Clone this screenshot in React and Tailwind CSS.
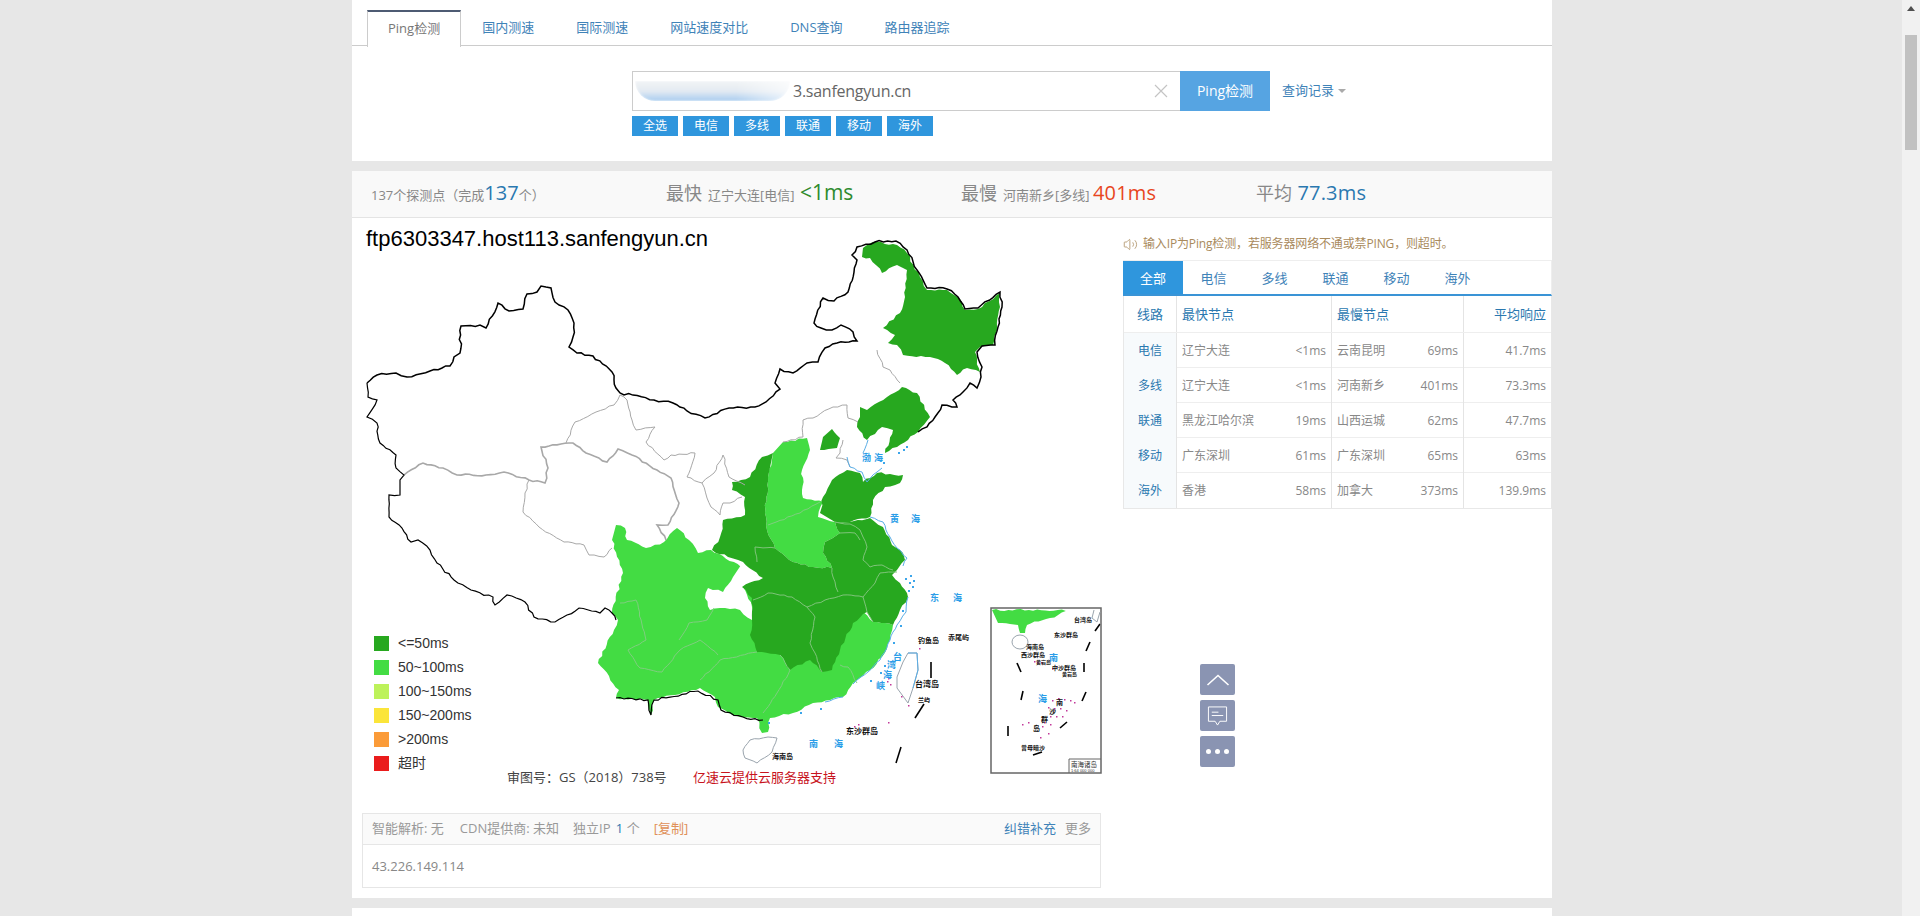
import React from 'react';
import { Volume2 } from 'lucide-react';

const tabs = ['国内测速', '国际测速', '网站速度对比', 'DNS查询', '路由器追踪'];
const filters = ['全选', '电信', '多线', '联通', '移动', '海外'];
const panelTabs = ['电信', '多线', '联通', '移动', '海外'];

const rows = [
  ['电信', '辽宁大连', '<1ms', '云南昆明', '69ms', '41.7ms'],
  ['多线', '辽宁大连', '<1ms', '河南新乡', '401ms', '73.3ms'],
  ['联通', '黑龙江哈尔滨', '19ms', '山西运城', '62ms', '47.7ms'],
  ['移动', '广东深圳', '61ms', '广东深圳', '65ms', '63ms'],
  ['海外', '香港', '58ms', '加拿大', '373ms', '139.9ms'],
];

const legend = [
  ['<=50ms', 'bg-[#27a81f]'],
  ['50~100ms', 'bg-[#43dc43]'],
  ['100~150ms', 'bg-[#bdf25a]'],
  ['150~200ms', 'bg-[#fbe53a]'],
  ['>200ms', 'bg-[#fb9b38]'],
  ['超时', 'bg-[#ea1c1c]'],
];

// map shapes, in page coordinates
const border1 = '367,383 377,375 396,373 407,377 430,371 450,366 454,357 460,353 461,326 480,325 486,328 498,303 509,311 523,309 527,294 537,292 541,286 551,288 555,302 568,310 574,323 573,337 569,347 577,353 593,356 612,372 616,388 620,393 654,400 673,403 687,411 705,418 729,408 755,407 766,402 780,389 775,383 780,369 793,373 807,363 818,362 825,348 837,343 857,341 853,332 841,325 832,330 821,328 814,323 823,298 834,301 848,292 857,260 852,255 857,247 875,242 896,241 907,250 917,270 927,288 947,289 958,297 965,309 978,308 1000,292 1002,307 998,327 995,345 982,346 977,352 982,367 981,377 977,388 970,383 963,392 953,400 957,407 942,405 935,417 927,427 918,432';
const border2 = '367,383 368,397 377,400 367,417 377,423 380,443 396,455 396,468 404,475 400,480 400,495 389,495 389,517 402,528 411,542 418,540 430,550 437,563 454,580 471,590 493,597 495,605 507,595 525,602 534,617 555,622 579,608 600,613 605,608 612,613 616,620';
const border3 = '616,698 648,700 651,715 654,700 698,691 718,700 721,710 743,717 763,720';
const heilongjiang = '863,248 873,242 897,245 907,253 920,277 927,290 947,290 959,298 965,310 978,309 1000,293 1000,307 997,327 993,345 980,347 975,352 980,372 967,368 957,375 945,363 930,357 903,355 897,345 888,343 895,335 883,328 900,313 905,297 907,270 897,265 882,273 870,258 862,257';
const liaoning = '860,407 867,410 887,397 902,387 917,393 930,417 918,432 897,447 885,453 893,430 882,427 867,440 857,427 860,417';
const beijing = '832,429 840,438 837,448 820,450 823,437';
const shandong = '820,513 823,497 832,480 847,470 860,473 863,482 877,473 903,475 900,483 885,487 873,500 870,517 850,522 835,522';
const henan = '783,442 807,438 810,450 802,470 803,498 823,502 818,517 835,522 840,533 825,542 823,553 832,568 813,567 793,562 775,548 767,530 765,513 768,477 773,453';
const southwest = '616,525 625,528 627,540 646,548 664,542 677,528 689,540 698,553 711,550 741,567 780,600 860,610 873,622 893,625 890,640 882,657 870,670 853,683 843,697 813,703 793,713 770,718 768,732 762,733 757,718 733,715 718,707 715,697 700,688 654,700 651,715 648,700 616,698 619,690 598,663 614,630 618,620 612,613 623,573 612,540';
const chongqing = '743,562 763,577 757,585 743,587 752,607 752,620 740,610 725,608 710,610 705,598 708,588 723,592 733,577';
const central = '773,453 762,457 750,477 732,482 732,490 745,497 745,515 723,520 720,537 712,550 728,557 743,562 763,578 742,587 752,598 752,620 750,635 757,652 780,655 790,670 810,660 822,672 832,670 840,650 853,623 867,612 873,622 893,625 900,610 908,597 900,583 892,575 897,570 905,560 903,553 892,545 883,527 870,518 850,522 835,522 840,533 825,542 823,553 832,568 813,567 793,562 775,548 767,530 765,513 768,477';

const grayLines = [
  '404,475 423,463 443,468 457,475 486,475 504,472 529,480 545,483 548,468 541,447 573,443 586,453 607,462 618,449 632,455 657,470 671,478 679,503 668,525 657,525 666,540',
  '620,395 614,405 596,412 575,422 566,443',
  '620,395 627,400 632,420 636,430 655,427 646,442 664,460 671,455 695,453 687,477 702,483 707,498 711,507 720,515 723,503 730,503 742,497',
  '702,483 714,473 723,455 729,477 745,485',
  '529,480 525,493 523,512 539,527 564,542 584,545 589,555 604,557 612,548',
  '877,350 883,367 890,370 900,383',
  '783,442 803,437 803,420 813,418 833,407 847,405 848,418 858,422',
  '843,440 840,453 836,458 847,460 850,467',
];
const darkLines = [
  '753,600 768,593 792,597 807,607 825,600 843,595 863,597 875,583 880,573 897,572',
  '807,607 815,617 810,643 815,653 822,672',
  '832,568 833,577 838,592',
  '835,522 850,524 860,530 863,537 867,547 863,560 870,567 882,565 893,570',
  '840,533 855,533 860,540',
  '775,548 755,547 757,562',
  '863,597 867,612 873,622',
];
const lightLines = [
  '620,603 636,600 646,640 628,650 640,668 662,672 680,650 700,640 718,655',
  '679,640 689,623 707,620 714,608',
  '700,680 720,660 757,652',
  '780,655 790,670 777,693 763,713',
  '840,665 848,667 857,683',
  '768,525 800,513 820,502',
];
const coast = [
  '847,457 850,467 862,472 867,482 877,472 882,468',
  '863,453 868,440',
  '870,517 883,522 890,537 897,548 907,558 903,566',
  '908,597 906,612 897,625 890,640 880,660 868,672 853,684',
  '843,697 825,702',
];
const dashes = [
  '931,662 931,678', '924,704 915,718', '901,747 896,763',
  '1017,663 1021,672', '1084,663 1084,672', '1090,642 1086,651', '1100,624 1095,631',
  '1023,691 1021,700', '1086,692 1082,701', '1067,722 1060,728', '1008,726 1008,736', '1042,752 1033,755',
];
const pinkDots = [
  [919,648],[888,722],[854,726],[858,724],[890,684],[888,678],[887,681],[901,696],[908,705],
  [1034,661],[1037,662],[1041,662],[1052,668],[1056,666],[1052,700],[1058,698],[1064,699],
  [1070,700],[1074,702],[1048,707],[1054,708],[1060,708],[1066,710],[1050,716],[1056,716],
  [1062,716],[1044,722],[1050,724],[1028,722],[1022,724],[1040,737],[1042,726],[1048,733],
];
const blueDots = [
  [905,578],[909,582],[912,586],[908,590],[913,580],[910,575],[884,665],[880,672],
  [870,680],[820,708],[800,712],[768,722],[903,449],[906,446],[898,452],[883,462],[902,610],[900,625],[893,642],
];
const sea = [
  ['渤', 862, 461], ['海', 874, 461], ['黄', 890, 522], ['海', 911, 522], ['东', 930, 601], ['海', 953, 601],
  ['南', 809, 747], ['海', 834, 747],
  ['台', 893, 660], ['湾', 887, 668], ['海', 883, 678], ['峡', 876, 689],
  ['南', 1049, 661], ['海', 1038, 702],
];
const islands = [
  ['钓鱼岛', 918, 643, 7], ['赤尾屿', 948, 640, 7], ['台湾岛', 915, 687, 8], ['兰屿', 918, 702, 6],
  ['东沙群岛', 846, 734, 8], ['海南岛', 772, 759, 7],
  ['台湾岛', 1074, 622, 6], ['东沙群岛', 1054, 637, 6], ['海南岛', 1026, 649, 6], ['西沙群岛', 1021, 657, 6],
  ['黄岩岛', 1036, 664, 5], ['中沙群岛', 1052, 670, 6], ['黄岩岛', 1062, 676, 5],
  ['沙', 1049, 714, 7], ['群', 1041, 722, 7], ['岛', 1033, 731, 7], ['南', 1056, 705, 7], ['曾母暗沙', 1021, 750, 6],
];

// roughen a straight-segment outline so it reads like a coast or a border
function jag(points, amp = 1.2) {
  const pts = points.split(' ').map((p) => p.split(',').map(Number));
  const out = [];
  pts.forEach(([x, y], i) => {
    out.push(`${x},${y}`);
    const next = pts[i + 1];
    if (!next) return;
    const dx = next[0] - x;
    const dy = next[1] - y;
    const len = Math.hypot(dx, dy);
    const n = Math.floor(len / 4);
    for (let k = 1; k < n; k++) {
      const t = k / n;
      const r = Math.sin((x + k) * 12.9898 + (y - k) * 78.233) * 43758.5453;
      const off = (r - Math.floor(r) - 0.5) * 2 * amp;
      out.push(`${(x + dx * t - (dy / len) * off).toFixed(1)},${(y + dy * t + (dx / len) * off).toFixed(1)}`);
    }
  });
  return out.join(' ');
}

function ChinaMap() {
  return (
    <svg viewBox="352 218 771 595" className="absolute left-0 top-0 w-[771px] h-[595px]">
      <polygon points={jag(southwest)} fill="#43dc43" />
      <polygon points={jag(henan)} fill="#43dc43" />
      <polygon points={jag(chongqing)} fill="#fff" />
      <polygon points={jag(central)} fill="#27a81f" />
      <polygon points={jag(shandong)} fill="#27a81f" />
      <polygon points={jag(heilongjiang)} fill="#27a81f" />
      <polygon points={jag(liaoning)} fill="#27a81f" />
      <polygon points={jag(beijing, 0.5)} fill="#27a81f" />
      {lightLines.map((p, i) => <polyline key={i} points={jag(p, 0.8)} fill="none" stroke="#7fce7f" strokeWidth="1" />)}
      {darkLines.map((p, i) => <polyline key={i} points={jag(p, 0.8)} fill="none" stroke="#7fc47a" strokeWidth="1" />)}
      {grayLines.map((p, i) => <polyline key={i} points={jag(p, 0.9)} fill="none" stroke="#a8a8a8" strokeWidth={i === 0 ? 1.6 : 1} />)}
      {coast.map((p, i) => <polyline key={i} points={jag(p, 0.8)} fill="none" stroke="#5aaee6" strokeWidth="1" />)}
      <polyline points={jag(border1)} fill="none" stroke="#000" strokeWidth="1.5" />
      <polyline points={jag(border2)} fill="none" stroke="#000" strokeWidth="1.2" />
      <polyline points={jag(border3)} fill="none" stroke="#000" strokeWidth="1.2" />
      {/* taiwan, hainan */}
      <polygon points="908,653 917,653 918,670 913,688 908,703 897,688 897,677 903,662" fill="#fff" stroke="#9aa4ad" strokeWidth="1" />
      <polyline points="908,653 917,653 918,670 913,688" fill="none" stroke="#5aaee6" strokeWidth="1" />
      <polygon points={jag('743,750 750,740 768,737 777,738 772,752 757,763 745,758 743,750', 0.6)} fill="#fff" stroke="#9aa4ad" strokeWidth="1" />
      {dashes.map((p, i) => <polyline key={i} points={p} fill="none" stroke="#000" strokeWidth="1.6" />)}
      {/* south sea inset */}
      <rect x="991" y="608" width="110" height="165" fill="none" stroke="#666" strokeWidth="1.5" />
      <polygon points={jag('992,610 1070,610 1050,618 1027,625 1025,633 1020,633 1018,625 998,623')} fill="#43dc43" />
      <ellipse cx="1020" cy="642" rx="8" ry="7" fill="#fff" stroke="#9aa4ad" strokeWidth="1" />
      <polyline points="1094,610 1092,618 1097,622 1100,612" fill="none" stroke="#9aa4ad" strokeWidth="1" />
      <polyline points="1069,773 1069,759 1101,759" fill="none" stroke="#666" strokeWidth="1" />
      {pinkDots.map(([x, y], i) => <rect key={i} x={x} y={y} width="1.5" height="1.5" fill="#c2389a" />)}
      {blueDots.map(([x, y], i) => <rect key={i} x={x} y={y} width="2" height="2" fill="#3ba5ea" />)}
      {sea.map(([t, x, y], i) => (
        <text key={i} x={x} y={y} fontSize="9" fill="#2a9de8" fontFamily="Noto Sans CJK SC" fontWeight="700">{t}</text>
      ))}
      {islands.map(([t, x, y, s], i) => (
        <text key={i} x={x} y={y} fontSize={s} fill="#111" fontFamily="Noto Sans CJK SC" fontWeight="700">{t}</text>
      ))}
      <text x="1071" y="767" fontSize="6.5" fill="#333" fontFamily="Noto Sans CJK SC">南海诸岛</text>
      <text x="1071" y="772" fontSize="4" fill="#333" fontFamily="Liberation Sans">1:64 000 000</text>
    </svg>
  );
}

export default function App() {
  return (
    <div className="flex h-[916px] overflow-hidden bg-[#e7e7e7] [font-family:'Open_Sans','Noto_Sans_CJK_SC',sans-serif] text-[13px]">
      <div className="flex-1 min-w-0">
        <div className="w-[1200px] ml-[352px]">
          {/* Search card */}
          <div className="bg-white h-[161px] pt-[10px]">
            <div className="flex h-[35px] pl-[15px] border-b border-[#ccc] box-content">
              <div className="h-[35px] px-[20px] border border-b-0 border-[#ccc] border-t-2 border-t-[#4d5b73] bg-white text-[#777] leading-[32px] -mb-px box-content">
                Ping检测
              </div>
              {tabs.map((t) => (
                <div key={t} className="px-[21px] leading-[34px] text-[#3f83b8]">{t}</div>
              ))}
            </div>
            <div className="flex items-start mt-[25px] pl-[280px]">
              <div className="w-[548px] h-[40px] border border-[#ccc] border-r-0 flex items-center pr-[12px]">
                <div className="w-[155px] h-[20px] ml-[2px] bg-gradient-to-b from-[#f2f4f6] via-[#e4ebf2] to-[#a9cdf0] rounded-b-full blur-[1px] [mask-image:linear-gradient(to_right,#000_65%,rgba(0,0,0,0.3))]" />
                <span className="flex-1 ml-[3px] text-[16px] tracking-[-0.25px] text-[#666]">3.sanfengyun.cn</span>
                <svg viewBox="0 0 14 14" className="w-[14px] h-[14px]">
                  <path d="M1 1 13 13M13 1 1 13" stroke="#c4c4c4" strokeWidth="1.2" fill="none" />
                </svg>
              </div>
              <div className="w-[90px] h-[40px] bg-[#56a4e2] text-white text-[14px] text-center leading-[40px]">Ping检测</div>
              <div className="ml-[12px] h-[40px] flex items-center gap-[4px] text-[#3f83b8]">
                查询记录
                <span className="w-0 h-0 border-x-[4px] border-x-transparent border-t-[4px] border-t-[#aaa]" />
              </div>
            </div>
            <div className="flex gap-[5px] pl-[280px] mt-[5px]">
              {filters.map((f) => (
                <div key={f} className="w-[46px] h-[20px] bg-[#2f96dd] text-white text-[12px] text-center leading-[20px]">{f}</div>
              ))}
            </div>
          </div>

          {/* Result card */}
          <div className="bg-white mt-[10px] h-[727px]">
            <div className="h-[47px] pb-[2px] bg-[#f9f9f9] border-b border-[#e4e4e4] pl-[19px] grid grid-cols-[295px_295px_295px_295px] items-center text-[#888]">
              <div>137个探测点（完成<span className="text-[20px] text-[#2a78b0]">137</span>个）</div>
              <div><span className="text-[18px]">最快</span><span className="ml-[6px]">辽宁大连[电信]</span> <span className="ml-[2px] text-[21px] text-[#2e8b2e]">&lt;1ms</span></div>
              <div><span className="text-[18px]">最慢</span><span className="ml-[6px]">河南新乡[多线]</span> <span className="text-[20px] tracking-[0.2px] text-[#e8461e]">401ms</span></div>
              <div><span className="text-[18px]">平均</span> <span className="ml-[2px] text-[20px] text-[#2a78b0] tracking-[0.2px]">77.3ms</span></div>
            </div>

            <div className="flex">
              <div className="w-[771px]">
                <div className="relative h-[595px]">
                  <ChinaMap />
                  <div className="relative pl-[14px] pt-[7px] text-[22px] leading-[28px] text-black [font-family:'Liberation_Sans',sans-serif]">
                    ftp6303347.host113.sanfengyun.cn
                  </div>
                  <div className="absolute left-[22px] top-[418px] flex flex-col gap-[9px] text-[14px] text-[#333] [font-family:'Liberation_Sans','Noto_Sans_CJK_SC',sans-serif]">
                    {legend.map(([label, color]) => (
                      <div key={label} className="flex items-center gap-[9px] h-[15px]">
                        <span className={`w-[15px] h-[15px] ${color}`} />
                        {label}
                      </div>
                    ))}
                  </div>
                  <div className="absolute left-[155px] top-[550px] text-[13px] text-[#444]">审图号：GS（2018）738号</div>
                  <div className="absolute left-[341px] top-[550px] text-[13px] text-[#c8141e]">亿速云提供云服务器支持</div>
                </div>
                <div className="ml-[10px] w-[739px] h-[75px] border border-[#e6e6e6]">
                  <div className="h-[31px] bg-[#fafafa] border-b border-[#e6e6e6] px-[9px] flex items-center text-[#999]">
                    <span>智能解析: 无</span>
                    <span className="ml-[16px]">CDN提供商: 未知</span>
                    <span className="ml-[14px]">独立IP <span className="text-[#2a78b0] ml-[2px]">1</span> 个</span>
                    <span className="ml-[14px] text-[#e09058]">[复制]</span>
                    <span className="ml-auto text-[#3f83b8]">纠错补充</span>
                    <span className="ml-[9px]">更多</span>
                  </div>
                  <div className="px-[9px] pt-[12px] text-[#888]">43.226.149.114</div>
                </div>
              </div>

              <div className="w-[429px] pt-[17px]">
                <div className="h-[25px] flex items-start text-[12px] tracking-[-0.15px] text-[#a98a5c]">
                  <Volume2 className="w-[15px] h-[15px] mt-[2px] mr-[5px] text-[#a98a5c]" strokeWidth={1.25} />
                  输入IP为Ping检测，若服务器网络不通或禁PING，则超时。
                </div>
                <div className="flex h-[36px] border-b-2 border-[#3a94d6] border-t border-t-[#eee] border-r border-r-[#eee]">
                  <div className="w-[60px] bg-[#2f96dd] text-white text-center leading-[34px]">全部</div>
                  {panelTabs.map((t) => (
                    <div key={t} className="w-[61px] text-center leading-[34px] text-[#3f83b8]">{t}</div>
                  ))}
                </div>
                <div className="border-l border-[#e8e8e8] border-r border-b">
                  <div className="grid grid-cols-[53px_155px_132px_88px] h-[37px] border-b border-[#eee] items-center text-[#2a78b0]">
                    <div className="h-full leading-[36px] text-center border-r border-[#e4e4e4]">线路</div>
                    <div className="h-full leading-[36px] pl-[5px] border-r border-[#e4e4e4]">最快节点</div>
                    <div className="h-full leading-[36px] pl-[5px] border-r border-[#e4e4e4]">最慢节点</div>
                    <div className="h-full leading-[36px] pr-[6px] text-right">平均响应</div>
                  </div>
                  {rows.map((r) => (
                    <div key={r[0]} className="grid grid-cols-[53px_155px_132px_88px] h-[35px] border-b border-[#eee] last:border-b-0 text-[12px] text-[#888] leading-[35px]">
                      <div className="bg-[#f7fafc] text-center text-[#2a78b0] border-r border-[#e4e4e4]">{r[0]}</div>
                      <div className="flex justify-between pl-[5px] pr-[5px] border-r border-[#e4e4e4]"><span>{r[1]}</span><span>{r[2]}</span></div>
                      <div className="flex justify-between pl-[5px] pr-[5px] border-r border-[#e4e4e4]"><span>{r[3]}</span><span>{r[4]}</span></div>
                      <div className="pr-[6px] text-right">{r[5]}</div>
                    </div>
                  ))}
                </div>
              </div>
            </div>
          </div>
          <div className="bg-white mt-[10px] h-[20px]" />
        </div>
      </div>

      {/* Scrollbar */}
      <div className="relative w-[18px] shrink-0 bg-[#f1f1f1]">
        <div className="mx-auto mt-[6px] w-0 h-0 border-x-[4px] border-x-transparent border-b-[5px] border-b-[#505050]" />
        <div className="absolute left-[3px] top-[35px] w-[12px] h-[115px] bg-[#c1c1c1]" />
      </div>

      {/* Floating tools */}
      <div className="fixed left-[1200px] top-[664px] flex flex-col gap-[5px]">
        <div className="w-[35px] h-[31px] bg-[#8a94b2] rounded-[2px] flex items-center justify-center">
          <svg viewBox="0 0 24 12" className="w-[24px] h-[12px]" fill="none" stroke="#fff" strokeWidth="1.6">
            <path d="M1.500 11 12 1.500 22.500 11" />
          </svg>
        </div>
        <div className="w-[35px] h-[31px] bg-[#8a94b2] rounded-[2px] flex items-center justify-center">
          <svg viewBox="0 0 22 24" className="w-[21px] h-[24px]" fill="none" stroke="#fff" strokeWidth="1">
            <path d="M1.500 2.500h19v15h-7l-2.500 4-2.500-4h-7z" />
            <path d="M5 8h7M5 11.500h12" />
          </svg>
        </div>
        <div className="w-[35px] h-[31px] bg-[#8a94b2] rounded-[2px] flex items-center justify-center gap-[4px]">
          <span className="w-[5px] h-[5px] rounded-full bg-white" />
          <span className="w-[5px] h-[5px] rounded-full bg-white" />
          <span className="w-[5px] h-[5px] rounded-full bg-white" />
        </div>
      </div>
    </div>
  );
}
